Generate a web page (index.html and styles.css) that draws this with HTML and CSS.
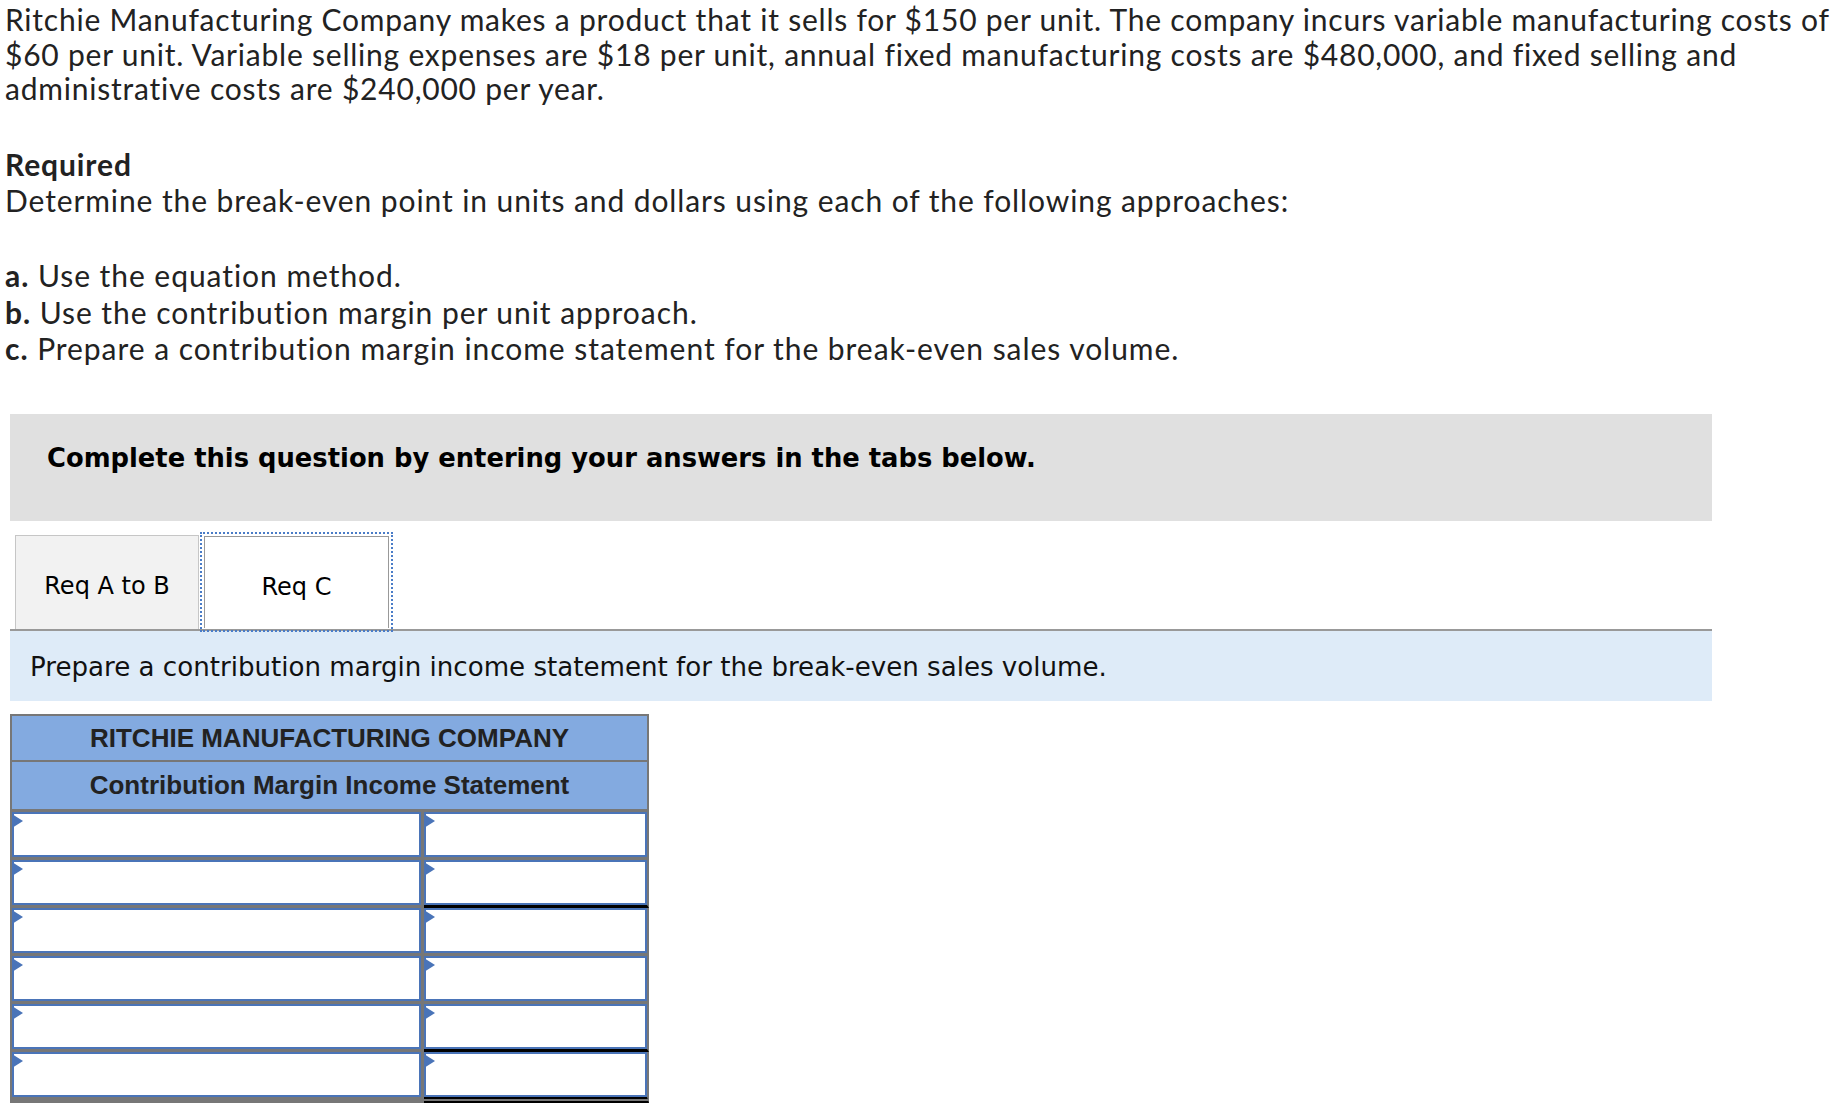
FILE: index.html
```html
<!DOCTYPE html>
<html lang="en">
<head>
<meta charset="utf-8">
<title>Ritchie Manufacturing Company</title>
<link rel="stylesheet" href="styles.css">
</head>
<body>
<main class="page">
  <section class="question">
    <p class="intro">Ritchie Manufacturing Company makes a product that it sells for $150 per unit. The company incurs variable manufacturing costs of $60 per unit. Variable selling expenses are $18 per unit, annual fixed manufacturing costs are $480,000, and fixed selling and administrative costs are $240,000 per year.</p>
    <h2 class="req-title">Required</h2>
    <p class="req-text">Determine the break-even point in units and dollars using each of the following approaches:</p>
    <ul class="parts">
      <li><b>a.</b> Use the equation method.</li>
      <li><b>b.</b> Use the contribution margin per unit approach.</li>
      <li><b>c.</b> Prepare a contribution margin income statement for the break-even sales volume.</li>
    </ul>
  </section>
  <section class="answer">
    <div class="banner">Complete this question by entering your answers in the tabs below.</div>
    <div class="tabs">
      <button class="tab" type="button">Req A to B</button>
      <button class="tab tab-active" type="button">Req C</button>
    </div>
    <div class="instruction">Prepare a contribution margin income statement for the break-even sales volume.</div>
    <table class="stmt">
      <thead>
        <tr class="h1"><th colspan="2"><div class="th-line th-line-1">RITCHIE MANUFACTURING COMPANY</div></th></tr>
        <tr class="h2"><th colspan="2"><div class="th-line th-line-2">Contribution Margin Income Statement</div></th></tr>
      </thead>
      <tbody>
        <tr><td class="lbl"><div class="field field-lbl"><input type="text"></div></td><td class="amt"><div class="field field-amt"><input type="text"></div></td></tr>
        <tr><td class="lbl"><div class="field field-lbl"><input type="text"></div></td><td class="amt sub"><div class="field field-amt"><input type="text"></div></td></tr>
        <tr><td class="lbl"><div class="field field-lbl"><input type="text"></div></td><td class="amt"><div class="field field-amt"><input type="text"></div></td></tr>
        <tr><td class="lbl"><div class="field field-lbl"><input type="text"></div></td><td class="amt"><div class="field field-amt"><input type="text"></div></td></tr>
        <tr><td class="lbl"><div class="field field-lbl"><input type="text"></div></td><td class="amt sub"><div class="field field-amt"><input type="text"></div></td></tr>
        <tr><td class="lbl"><div class="field field-lbl"><input type="text"></div></td><td class="amt total"><div class="field field-amt"><input type="text"></div></td></tr>
      </tbody>
    </table>
  </section>
</main>
</body>
</html>
```

FILE: styles.css
```css
* { box-sizing: border-box; }
html, body { margin: 0; padding: 0; background: #fff; }
body { font-family: Lato, "Noto Sans", sans-serif; color: #222; }

.page { padding: 2px 4px 0 5px; }

.question { font-size: 30px; letter-spacing: 0.9px; }
.intro { margin: 0; line-height: 34.5px; letter-spacing: 0.78px; }
.req-title { margin: 40px 0 0; font-size: 30px; line-height: 36.5px; font-weight: 700; }
.req-text { margin: 0; line-height: 36.5px; }
.parts { list-style: none; margin: 38.5px 0 0; padding: 0; line-height: 36.5px; letter-spacing: 0.95px; }
.parts b { font-weight: 700; }

.answer { margin: 47.5px 0 0 5px; width: 1702px; }

.banner {
  height: 107px;
  background: #e0e0e0;
  padding: 29px 37px 0;
  font: 700 25.8px/30px "DejaVu Sans", Verdana, sans-serif;
  color: #000;
}

.tabs {
  display: flex;
  align-items: flex-end;
  gap: 5px;
  margin-top: 14px;
  padding-left: 5px;
  border-bottom: 2px solid #999;
}
.tab {
  display: flex;
  align-items: center;
  justify-content: center;
  width: 184px;
  height: 94px;
  margin: 0;
  padding: 6px 0 0;
  background: #f2f2f2;
  border: 1px solid #c6c6c6;
  border-bottom: 0;
  font: 400 24px/28px "DejaVu Sans", Verdana, sans-serif;
  color: #000;
}
.tab-active {
  width: 185px;
  height: 92px;
  margin-bottom: 1px;
  padding-top: 8px;
  background: #fff;
  border: 1px solid #999;
  border-bottom: 0;
  outline: 2px dotted #4a7cc7;
  outline-offset: 2px;
}

.instruction {
  height: 70px;
  background: #deebf8;
  padding: 21px 20px 0;
  font: 400 26.1px/30px "DejaVu Sans", Verdana, sans-serif;
  color: #111;
}

.stmt {
  margin-top: 13px;
  border-collapse: separate;
  border-spacing: 0;
  border-top: 2px solid #777;
  border-left: 2px solid #777;
}
.stmt th {
  padding: 0;
  background: #83aae0;
  border-right: 2px solid #777;
  font: 700 26px "Liberation Sans", Arial, sans-serif;
  color: #222;
  text-align: center;
}
.stmt .h1 th { border-bottom: 2px solid #777; }
.stmt .h2 th { border-bottom: 3px solid #777; }
.th-line-1 { height: 44px; line-height: 44px; }
.th-line-2 { height: 47px; line-height: 47px; }

.stmt td {
  padding: 0;
  vertical-align: top;
  background: #777;
  border-bottom: 3px solid #777;
}
.stmt td.lbl { border-right: 3px solid #777; }
.stmt td.amt { border-right: 2px solid #777; }
.stmt td.sub { border-bottom-color: #000; }
.stmt td.total { border-bottom: 6px double #000; }

.field { position: relative; height: 45px; }
.field-lbl { width: 409px; }
.field-amt { width: 223px; }
.field input {
  display: block;
  width: 100%;
  height: 45px;
  margin: 0;
  padding: 0 10px;
  border: 2px solid #4a74b8;
  border-radius: 0;
  background: #fff;
  font: 400 22px "Liberation Sans", Arial, sans-serif;
  outline: none;
}
.field::before {
  content: "";
  position: absolute;
  left: 0;
  top: 2px;
  border-left: 11px solid #4a74b8;
  border-top: 7px solid transparent;
  border-bottom: 7px solid transparent;
}
```
